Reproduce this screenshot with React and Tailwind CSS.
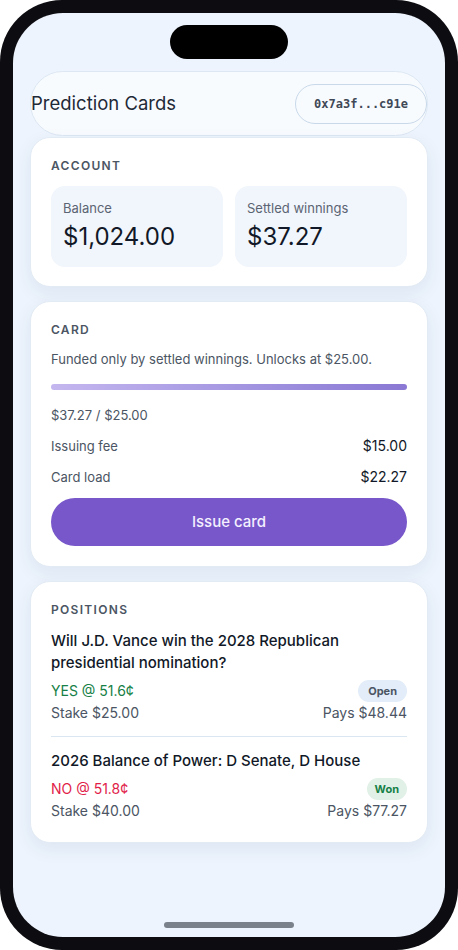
import React from "react";

const cardCls =
  "rounded-[20px] border border-[#e2eaf4] bg-white px-5 pt-5 shadow-[0_6px_18px_rgba(30,60,110,0.08)]";

function SectionTitle({ children }) {
  return (
    <div className="text-[12px] leading-4 font-semibold tracking-[0.11em] text-[#4b5563] uppercase">
      {children}
    </div>
  );
}

function StatBox({ label, value }) {
  return (
    <div className="rounded-[14px] bg-[#f1f6fc] px-3 pt-[13px] pb-4">
      <div className="text-[13px] leading-[18px] text-[#5b6473]">{label}</div>
      <div className="mt-1.5 text-[24px] leading-7 text-[#111827]">{value}</div>
    </div>
  );
}

function Row({ label, value, className = "" }) {
  return (
    <div className={`flex h-5 items-center justify-between ${className}`}>
      <span className="text-[13px] leading-[18px] text-[#4b5563]">{label}</span>
      <span className="text-[14px] leading-5 text-[#111827]">{value}</span>
    </div>
  );
}

const positions = [
  {
    q: "Will J.D. Vance win the 2028 Republican presidential nomination?",
    side: "YES @ 51.6¢",
    sideCls: "text-[#168046]",
    status: "Open",
    badgeCls: "bg-[#e2edf9] text-[#4b5563] px-2.5",
    stake: "Stake $25.00",
    pays: "Pays $48.44",
  },
  {
    q: "2026 Balance of Power: D Senate, D House",
    side: "NO @ 51.8¢",
    sideCls: "text-[#e11d48]",
    status: "Won",
    badgeCls: "bg-[#e1f1e7] text-[#168046] px-2",
    stake: "Stake $40.00",
    pays: "Pays $77.27",
  },
];

export default function App() {
  return (
    <div
      className="h-[950px] w-[458px] bg-white"
      style={{ fontFamily: "Inter, 'Noto Sans', sans-serif" }}
    >
      <div className="h-full rounded-[62px] bg-[#0d0c11] p-[13px]">
        <div className="flex h-full flex-col overflow-hidden rounded-[50px] bg-[#edf4fd] px-[17px]">
          {/* dynamic island */}
          <div className="mx-auto mt-3 h-[34px] w-[118px] shrink-0 rounded-full bg-black" />

          {/* header */}
          <div className="mt-3 flex h-[65px] shrink-0 items-center justify-between rounded-full border border-[#dce7f3] bg-[#f8fbfe]">
            <div className="-mt-0.5 text-[18.5px] leading-6 text-[#1f2937]">Prediction Cards</div>
            <div
              className="flex h-10 items-center rounded-full border border-[#c9d9ea] px-[18px] text-[12px] font-semibold text-[#3f4856]"
              style={{ fontFamily: "'DejaVu Sans Mono', monospace" }}
            >
              0x7a3f...c91e
            </div>
          </div>

          <div className="mt-px flex flex-col gap-3.5">
            {/* account */}
            <div className={`${cardCls} pb-[19px]`}>
              <SectionTitle>Account</SectionTitle>
              <div className="mt-3 grid grid-cols-2 gap-3">
                <StatBox label="Balance" value="$1,024.00" />
                <StatBox label="Settled winnings" value="$37.27" />
              </div>
            </div>

            {/* card */}
            <div className={`${cardCls} pb-5`}>
              <SectionTitle>Card</SectionTitle>
              <p className="mt-3 text-[13px] leading-[18px] text-[#4b5563]">
                Funded only by settled winnings. Unlocks at $25.00.
              </p>
              <div className="mt-4 h-1.5 rounded-full bg-gradient-to-r from-[#c4b7ef] to-[#8a78d4]" />
              <div className="mt-4 text-[13px] leading-[18px] text-[#4b5563]">$37.27 / $25.00</div>
              <Row label="Issuing fee" value="$15.00" className="mt-3" />
              <Row label="Card load" value="$22.27" className="mt-[11px]" />
              <button className="mt-[11px] flex h-12 w-full items-center justify-center rounded-full bg-[#7757c9] text-[15px] font-medium text-[#f4f0ff]">
                Issue card
              </button>
            </div>

            {/* positions */}
            <div className={`${cardCls} pb-[21px]`}>
              <SectionTitle>Positions</SectionTitle>
              <div className="mt-3">
                {positions.map((p, i) => (
                  <div
                    key={p.q}
                    className={i === 0 ? "pb-[13px]" : "border-t border-[#dbe6f3] pt-[13px]"}
                  >
                    <div className="text-[15px] leading-[22px] font-medium text-[#111827]">{p.q}</div>
                    <div className="mt-1.5 flex h-[22px] items-center justify-between">
                      <span className={`text-[14px] leading-5 ${p.sideCls}`}>{p.side}</span>
                      <span
                        className={`flex h-[22px] items-center rounded-full text-[11px] font-bold ${p.badgeCls}`}
                      >
                        {p.status}
                      </span>
                    </div>
                    <div className="mt-px flex items-center justify-between text-[14px] leading-5 text-[#4b5563]">
                      <span>{p.stake}</span>
                      <span>{p.pays}</span>
                    </div>
                  </div>
                ))}
              </div>
            </div>
          </div>

          {/* home indicator */}
          <div className="mx-auto mt-auto mb-[9px] h-[6px] w-[130px] shrink-0 rounded-full bg-[#7a818b]" />
        </div>
      </div>
    </div>
  );
}
